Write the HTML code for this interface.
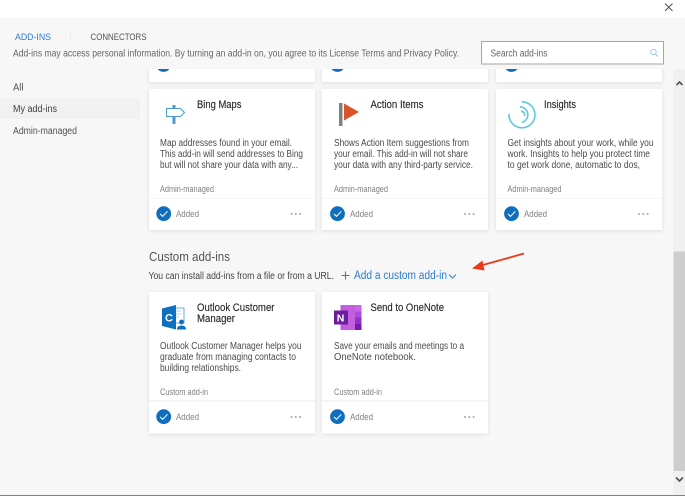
<!DOCTYPE html>
<html>
<head>
<meta charset="utf-8">
<style>
html,body{margin:0;padding:0;width:685px;height:496px;overflow:hidden;background:#f7f7f7}
svg{display:block;filter:blur(.35px)}
text{font-family:"Liberation Sans",sans-serif;font-size:10px;fill:#505050}
.t{font-size:11px;fill:#2a2a2a;stroke:#2a2a2a;stroke-width:.15px}
.d{fill:#4a4a4a}
.m{font-size:9px;fill:#808080}
.a{font-size:9.500px;fill:#808080}
.card{fill:#fff;filter:drop-shadow(0 1px 2px rgba(0,0,0,.1))}
</style>
</head>
<body>
<svg width="685" height="496" viewBox="0 0 685 496" xmlns="http://www.w3.org/2000/svg">
<defs>
<clipPath id="c"><rect x="140" y="69" width="533" height="427"/></clipPath>
<g id="added">
<circle cx="0" cy="0" r="7.400" fill="#106ebe"/>
<path d="M-3.600 0.200L-1 2.700L3.800-2.400" fill="none" stroke="#fff" stroke-width="1"/>
</g>
<g id="dots" fill="#b4b4b4">
<circle cx="0" cy="0" r="1.100"/><circle cx="4.300" cy="0" r="1.100"/><circle cx="8.600" cy="0" r="1.100"/>
</g>
</defs>

<rect width="685" height="496" fill="#f7f7f7"/>
<rect width="685" height="18" fill="#fff"/>
<path d="M665 3.500L672.500 11M672.500 3.500L665 11" stroke="#555" stroke-width="1" fill="none"/>

<!-- Header -->
<text x="15" y="40" textLength="36" lengthAdjust="spacingAndGlyphs" style="font-size:9.500px;fill:#2b7cd3">ADD-INS</text>
<rect x="70" y="32" width="1" height="7" fill="#eaeaea"/>
<text x="90.500" y="40" textLength="56" lengthAdjust="spacingAndGlyphs" style="font-size:9.500px;fill:#555">CONNECTORS</text>
<text x="13" y="56.500" textLength="446" lengthAdjust="spacingAndGlyphs" style="fill:#666">Add-ins may access personal information. By turning an add-in on, you agree to its License Terms and Privacy Policy.</text>

<rect x="481.500" y="41.500" width="182" height="22.500" fill="#fff" stroke="#a6a6a6"/>
<text x="490.500" y="56.500" textLength="57" lengthAdjust="spacingAndGlyphs" style="fill:#666">Search add-ins</text>
<circle cx="653.500" cy="52" r="2.700" fill="none" stroke="#9cc3ec" stroke-width=".9"/>
<path d="M655.500 54L658 56.500" stroke="#9cc3ec" stroke-width=".9"/>

<!-- Left nav -->
<rect x="0" y="98" width="140" height="21" fill="#f1f1f1"/>
<text x="13" y="90.500" textLength="10.500" lengthAdjust="spacingAndGlyphs">All</text>
<text x="13" y="112" textLength="44" lengthAdjust="spacingAndGlyphs" style="fill:#404040">My add-ins</text>
<text x="13" y="134" textLength="64" lengthAdjust="spacingAndGlyphs">Admin-managed</text>

<!-- Scrollbar -->
<rect x="673.500" y="69" width="11.500" height="426" fill="#f0f0f0"/>
<rect x="673.500" y="251.500" width="11.500" height="219.500" fill="#cdcdcd"/>
<path d="M676.500 85L679.500 82L682.500 85" fill="none" stroke="#505050" stroke-width="1.600"/>
<path d="M676 477.500L679.500 481L683 477.500" fill="none" stroke="#505050" stroke-width="1.600"/>

<g clip-path="url(#c)">
<!-- Top partial row -->
<rect class="card" x="149" y="40" width="166" height="42"/>
<rect class="card" x="322" y="40" width="166" height="42"/>
<rect class="card" x="496" y="40" width="166" height="42"/>
<use href="#added" x="163.500" y="64.500"/>
<use href="#added" x="337.500" y="64.500"/>
<use href="#added" x="511.500" y="64.500"/>

<!-- Row 2 cards -->
<rect class="card" x="149" y="89" width="166" height="141"/>
<rect class="card" x="322" y="89" width="166" height="141"/>
<rect class="card" x="496" y="89" width="166" height="141"/>
<rect x="149" y="198" width="166" height="1" fill="#f5f5f5"/>
<rect x="322" y="198" width="166" height="1" fill="#f5f5f5"/>
<rect x="496" y="198" width="166" height="1" fill="#f5f5f5"/>

<!-- Bing icon -->
<rect x="172.500" y="105" width="3" height="19" fill="#4a9bd0"/>
<path d="M166.500 108.500H180.500L184.500 112.500L180.500 116.500H166.500Z" fill="#fff" stroke="#4a9bd0" stroke-width="1"/>
<text class="t" x="197" y="108" textLength="44.500" lengthAdjust="spacingAndGlyphs">Bing Maps</text>
<text class="d" x="160" y="146" textLength="132" lengthAdjust="spacingAndGlyphs">Map addresses found in your email.</text>
<text class="d" x="160" y="157" textLength="143" lengthAdjust="spacingAndGlyphs">This add-in will send addresses to Bing</text>
<text class="d" x="160" y="168" textLength="138" lengthAdjust="spacingAndGlyphs">but will not share your data with any...</text>
<text class="m" x="160" y="192" textLength="54" lengthAdjust="spacingAndGlyphs">Admin-managed</text>
<use href="#added" x="163.700" y="213.700"/>
<text class="a" x="176" y="217" textLength="23" lengthAdjust="spacingAndGlyphs">Added</text>
<use href="#dots" x="291.500" y="214"/>

<!-- Action icon -->
<rect x="339" y="103" width="3.500" height="23" fill="#808080"/>
<path d="M344 103.500L359 112L344 120.500Z" fill="#d9542b"/>
<text class="t" x="370.500" y="108" textLength="53" lengthAdjust="spacingAndGlyphs">Action Items</text>
<text class="d" x="334" y="146" textLength="135" lengthAdjust="spacingAndGlyphs">Shows Action Item suggestions from</text>
<text class="d" x="334" y="157" textLength="134" lengthAdjust="spacingAndGlyphs">your email. This add-in will not share</text>
<text class="d" x="334" y="168" textLength="139" lengthAdjust="spacingAndGlyphs">your data with any third-party service.</text>
<text class="m" x="334" y="192" textLength="54" lengthAdjust="spacingAndGlyphs">Admin-managed</text>
<use href="#added" x="337.500" y="213.700"/>
<text class="a" x="350" y="217" textLength="23" lengthAdjust="spacingAndGlyphs">Added</text>
<use href="#dots" x="465" y="214"/>

<!-- Insights icon -->
<g fill="none" stroke="#5fc9dc" stroke-width="1.600">
<path d="M521.500 101.800A13 13 0 1 1 509 114"/>
<path d="M520 106.800A8 8 0 0 1 522 122.500"/>
<path d="M521 111.500A3.300 3.300 0 0 1 524.500 116"/>
</g>
<text class="t" x="544" y="108" textLength="32" lengthAdjust="spacingAndGlyphs">Insights</text>
<text class="d" x="507.500" y="146" textLength="146" lengthAdjust="spacingAndGlyphs">Get insights about your work, while you</text>
<text class="d" x="507.500" y="157" textLength="142.500" lengthAdjust="spacingAndGlyphs">work. Insights to help you protect time</text>
<text class="d" x="507.500" y="168" textLength="132.500" lengthAdjust="spacingAndGlyphs">to get work done, automatic to dos,</text>
<text class="m" x="507.500" y="192" textLength="54" lengthAdjust="spacingAndGlyphs">Admin-managed</text>
<use href="#added" x="511.500" y="213.700"/>
<text class="a" x="524" y="217" textLength="23" lengthAdjust="spacingAndGlyphs">Added</text>
<use href="#dots" x="639" y="214"/>

<!-- Custom section -->
<text x="149" y="261" textLength="81" lengthAdjust="spacingAndGlyphs" style="font-size:12.500px;fill:#555">Custom add-ins</text>
<text x="148.500" y="279" textLength="185.500" lengthAdjust="spacingAndGlyphs" style="fill:#444">You can install add-ins from a file or from a URL.</text>
<path d="M345.500 271.500V279.500M341.500 275.500H349.500" stroke="#2b7cd3" stroke-width="1.100" fill="none"/>
<text x="354" y="279" textLength="93" lengthAdjust="spacingAndGlyphs" style="font-size:11.500px;fill:#2b7cd3">Add a custom add-in</text>
<path d="M449 274.500L452.500 278L456 274.500" fill="none" stroke="#2b7cd3" stroke-width="1"/>

<!-- Arrow -->
<path d="M524 253.500L481 265.500" stroke="#ea3a1c" stroke-width="1.800" fill="none"/>
<path d="M472 268.500L482.500 260.500L484.500 270.500Z" fill="#ea3a1c"/>

<!-- Custom cards -->
<rect class="card" x="149" y="292" width="166" height="141.500"/>
<rect class="card" x="322" y="292" width="166" height="141.500"/>
<rect x="149" y="400" width="166" height="1.500" fill="#f3f3f3"/>
<rect x="322" y="400" width="166" height="1.500" fill="#f3f3f3"/>

<!-- Outlook CM icon -->
<path d="M170 308H184V323H170Z" fill="#fff" stroke="#4a8fd0" stroke-width=".8"/>
<path d="M176 311H181M176 314H181M176 317H179" stroke="#9cc3e8" stroke-width=".8"/>
<path d="M162 308.500L176 305V329.500L162 326Z" fill="#0f6fc0"/>
<text x="165" y="321.500" style="font-size:11px;font-weight:bold;fill:#fff">C</text>
<circle cx="181.500" cy="322" r="2.400" fill="#0f6fc0"/>
<path d="M177 329.500Q177 325.500 181.500 325.500Q186 325.500 186 329.500Z" fill="#0f6fc0"/>
<text class="t" x="197" y="311" textLength="77.500" lengthAdjust="spacingAndGlyphs">Outlook Customer</text>
<text class="t" x="197" y="322" textLength="38" lengthAdjust="spacingAndGlyphs">Manager</text>
<text class="d" x="160" y="349" textLength="141.500" lengthAdjust="spacingAndGlyphs">Outlook Customer Manager helps you</text>
<text class="d" x="160" y="360" textLength="136" lengthAdjust="spacingAndGlyphs">graduate from managing contacts to</text>
<text class="d" x="160" y="371" textLength="81" lengthAdjust="spacingAndGlyphs">building relationships.</text>
<text class="m" x="160" y="395" textLength="48" lengthAdjust="spacingAndGlyphs">Custom add-in</text>
<use href="#added" x="163.700" y="416.700"/>
<text class="a" x="176" y="420" textLength="23" lengthAdjust="spacingAndGlyphs">Added</text>
<use href="#dots" x="291.500" y="417"/>

<!-- OneNote icon -->
<rect x="340.500" y="305" width="21" height="25" fill="#c35fdf"/>
<rect x="355" y="305" width="6.500" height="6.500" fill="#ca64ea"/>
<rect x="355" y="311.500" width="6.500" height="6" fill="#ae4bd5"/>
<rect x="355" y="317.500" width="6.500" height="6.500" fill="#9332bf"/>
<rect x="355" y="324" width="6.500" height="6" fill="#7719aa"/>
<rect x="334" y="310.500" width="14" height="14" fill="#6c1c9e"/>
<text x="336.800" y="321.500" style="font-size:10.500px;font-weight:bold;fill:#fff">N</text>
<text class="t" x="370.500" y="311" textLength="73.500" lengthAdjust="spacingAndGlyphs">Send to OneNote</text>
<text class="d" x="334" y="349" textLength="130" lengthAdjust="spacingAndGlyphs">Save your emails and meetings to a</text>
<text class="d" x="334" y="360" textLength="82" lengthAdjust="spacingAndGlyphs">OneNote notebook.</text>
<text class="m" x="334" y="395" textLength="48" lengthAdjust="spacingAndGlyphs">Custom add-in</text>
<use href="#added" x="337.500" y="416.700"/>
<text class="a" x="350" y="420" textLength="23" lengthAdjust="spacingAndGlyphs">Added</text>
<use href="#dots" x="465" y="417"/>
</g>

<rect x="0" y="495" width="685" height="1" fill="#4a90c8"/>
</svg>
</body>
</html>
